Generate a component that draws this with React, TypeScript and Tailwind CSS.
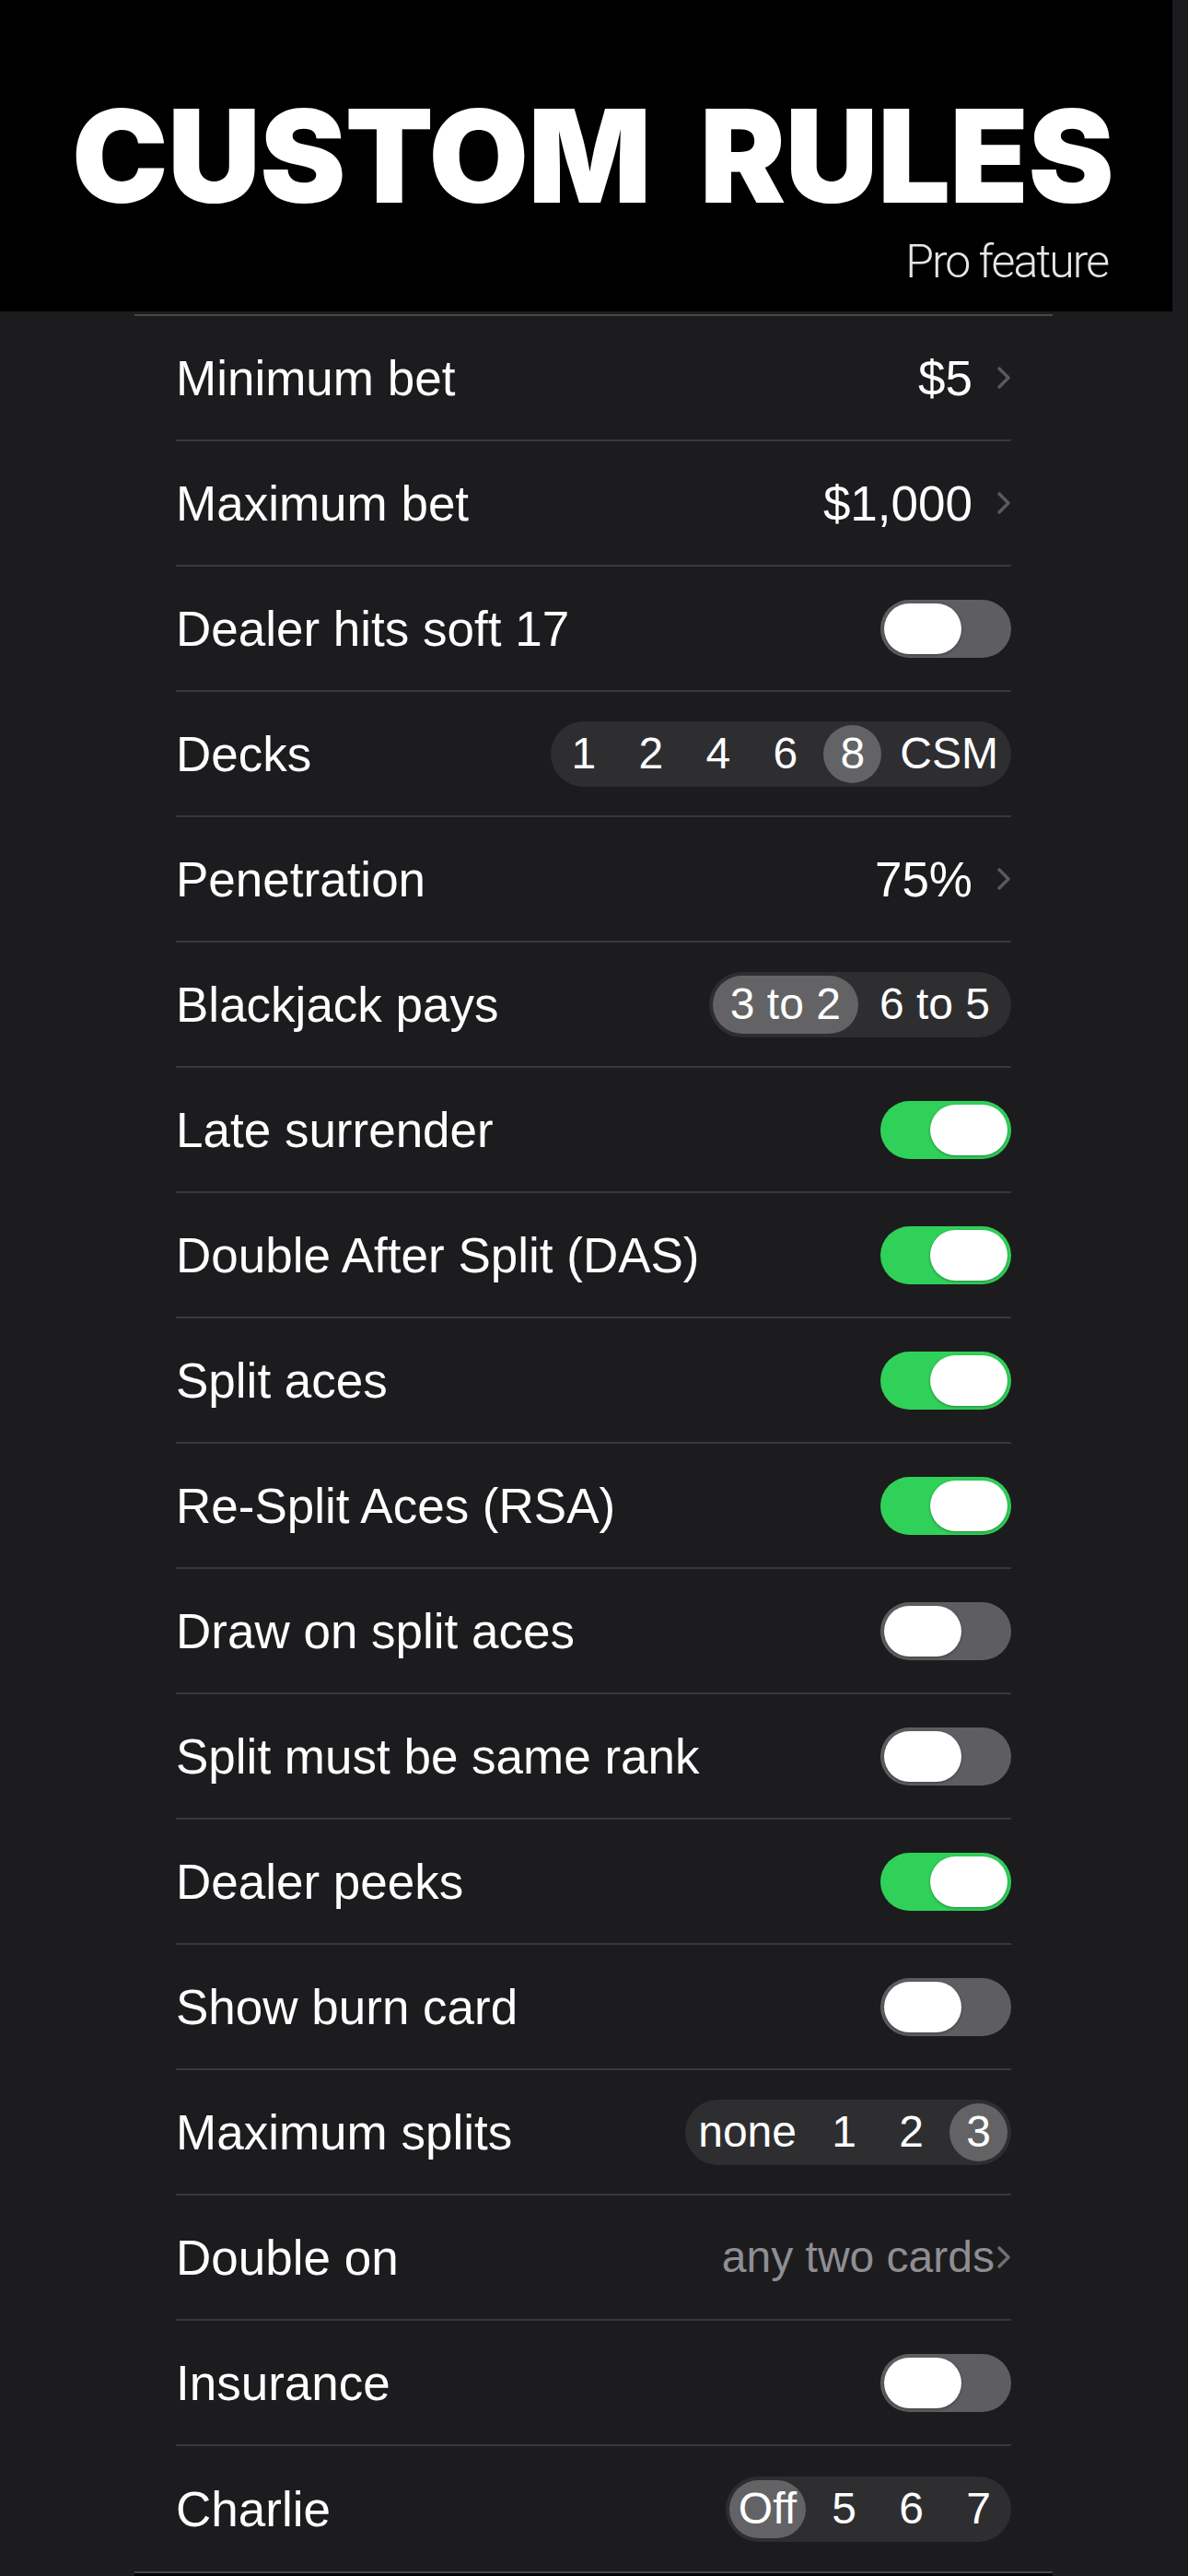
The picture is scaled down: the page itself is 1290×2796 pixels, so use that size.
import React from 'react';

type Row =
  | { label: string; kind: 'value'; value: string; muted?: boolean }
  | { label: string; kind: 'toggle'; on: boolean }
  | { label: string; kind: 'segment'; options: string[]; selected: number; wide?: boolean };

const rows: Row[] = [
  { label: 'Minimum bet', kind: 'value', value: '$5' },
  { label: 'Maximum bet', kind: 'value', value: '$1,000' },
  { label: 'Dealer hits soft 17', kind: 'toggle', on: false },
  { label: 'Decks', kind: 'segment', options: ['1', '2', '4', '6', '8', 'CSM'], selected: 4 },
  { label: 'Penetration', kind: 'value', value: '75%' },
  { label: 'Blackjack pays', kind: 'segment', options: ['3 to 2', '6 to 5'], selected: 0, wide: true },
  { label: 'Late surrender', kind: 'toggle', on: true },
  { label: 'Double After Split (DAS)', kind: 'toggle', on: true },
  { label: 'Split aces', kind: 'toggle', on: true },
  { label: 'Re-Split Aces (RSA)', kind: 'toggle', on: true },
  { label: 'Draw on split aces', kind: 'toggle', on: false },
  { label: 'Split must be same rank', kind: 'toggle', on: false },
  { label: 'Dealer peeks', kind: 'toggle', on: true },
  { label: 'Show burn card', kind: 'toggle', on: false },
  { label: 'Maximum splits', kind: 'segment', options: ['none', '1', '2', '3'], selected: 3 },
  { label: 'Double on', kind: 'value', value: 'any two cards', muted: true },
  { label: 'Insurance', kind: 'toggle', on: false },
  { label: 'Charlie', kind: 'segment', options: ['Off', '5', '6', '7'], selected: 0 },
];

function Chevron({ light }: { light?: boolean }) {
  return (
    <svg width="16" height="26" viewBox="0 0 16 26" fill="none" className="shrink-0">
      <path
        d="M3 3 L13 13 L3 23"
        stroke={light ? '#6e6e73' : '#5a5a5e'}
        strokeWidth="3.5"
        strokeLinecap="round"
        strokeLinejoin="round"
      />
    </svg>
  );
}

function Toggle({ on }: { on: boolean }) {
  return (
    <div
      className={`w-[142px] h-[63px] rounded-full p-[4px] flex ${
        on ? 'bg-[#30d158] justify-end' : 'bg-[#5e5e62] justify-start'
      }`}
    >
      <div className="w-[84px] h-[55px] rounded-full bg-white shadow-[0_1px_3px_rgba(0,0,0,0.35)]" />
    </div>
  );
}

function Segment({ options, selected, wide }: { options: string[]; selected: number; wide?: boolean }) {
  return (
    <div
      className={`flex items-center rounded-full bg-[#2e2e31] p-[4px] h-[71px] ${
        wide ? 'gap-[4px]' : 'gap-[10px]'
      }`}
    >
      {options.map((opt, i) => (
        <div
          key={opt}
          className={`h-[63px] min-w-[63px] rounded-full flex items-center justify-center text-[48px] leading-none text-white whitespace-nowrap ${
            wide ? 'px-[19px]' : 'px-[10px]'
          } ${i === selected ? 'bg-[#636366]' : ''}`}
        >
          {opt}
        </div>
      ))}
    </div>
  );
}

export default function App() {
  return (
    <div className="min-h-[2796px] bg-[#1c1c1e] font-['Liberation_Sans',Arial,sans-serif] text-white">
      <header className="w-[1273px] h-[338px] bg-black pt-[99px] flex flex-col">
        <h1 className="pl-[78px] font-['Inter',sans-serif] font-black text-[140px] leading-none tracking-[-0.005em] [word-spacing:26px] whitespace-nowrap">
          CUSTOM RULES
        </h1>
        <p className="self-end pr-[70px] mt-[20px] font-['Roboto',sans-serif] font-light text-[50px] leading-none tracking-[-0.04em] text-[#e5e5ea]">
          Pro feature
        </p>
      </header>

      <div className="ml-[146px] w-[997px] mt-[3px] border-t-2 border-b-2 border-[#48484a] px-[45px]">
        {rows.map((row, i) => (
          <div
            key={row.label}
            className={`h-[136px] flex items-center justify-between ${
              i < rows.length - 1 ? 'border-b-2 border-[#38383a]' : ''
            }`}
          >
            <span className="text-[53px] leading-none whitespace-nowrap">{row.label}</span>
            {row.kind === 'value' && (
              <div className={`flex items-center ${row.muted ? 'gap-[2px]' : 'gap-[26px]'}`}>
                <span
                  className={`leading-none whitespace-nowrap ${
                    row.muted ? 'text-[48px] text-[#8e8e93]' : 'text-[53px] text-white'
                  }`}
                >
                  {row.value}
                </span>
                <Chevron light={row.muted} />
              </div>
            )}
            {row.kind === 'toggle' && <Toggle on={row.on} />}
            {row.kind === 'segment' && (
              <Segment options={row.options} selected={row.selected} wide={row.wide} />
            )}
          </div>
        ))}
      </div>
      <div className="ml-[146px] w-[997px] h-[10px] bg-black" />
    </div>
  );
}
